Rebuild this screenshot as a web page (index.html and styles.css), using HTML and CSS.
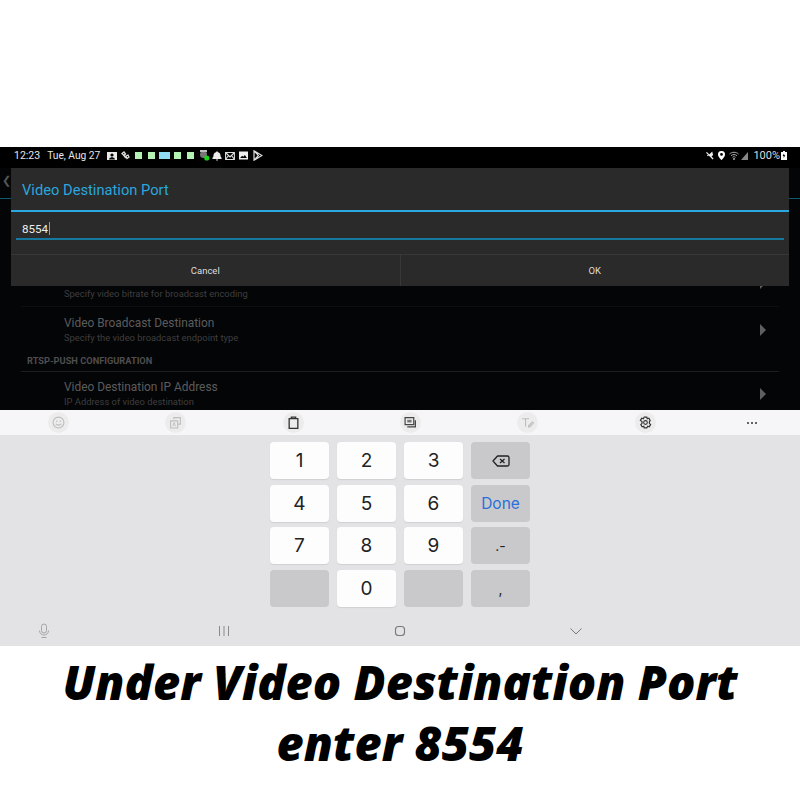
FILE: index.html
```html
<!DOCTYPE html>
<html lang="en">
<head>
	<meta charset="UTF-8">
	<title>Video Destination Port</title>
	<link rel="stylesheet" href="styles.css">
</head>
<body>
	<div class="page">
		<div class="topgap"></div>
		<div class="screen">
			<div class="status">
				<span class="clock">12:23</span>
				<span class="date">Tue, Aug 27</span>
				<div class="notifs">
					<svg class="ic card" viewBox="0 0 10 10"><path fill="#e8e8e8" fill-rule="evenodd" d="M0 1h10v8H0zM5 2.400a1.600 1.600 0 1 0 0 3.200 1.600 1.600 0 0 0 0-3.200zM2 8.400h6C7.600 6.800 6 6.300 5 6.300S2.400 6.800 2 8.400z"/></svg>
					<svg class="ic link" viewBox="0 0 9 10"><path fill="none" stroke="#ddd" stroke-width="1.300" d="M1 2.500l2-1.500 1.500 2L3 4.500zM5 5l2-1 1 2-2 1.500zM3 5l2 2"/></svg>
					<i class="sq m5"></i>
					<i class="sq m6"></i>
					<i class="sq wide"></i>
					<i class="sq m4"></i>
					<i class="sq m6"></i>
					<svg class="ic avatar" viewBox="0 0 11 11"><circle cx="4.500" cy="4.500" r="3.500" fill="#777"/><path fill="#bbb" d="M1 0h7v2H1z"/><circle cx="7.800" cy="8" r="2.600" fill="#1fd11f"/></svg>
					<svg class="ic bell" viewBox="0 0 10 10"><path fill="#eee" d="M5 0l1 1.200C8 1.700 8.600 3.500 8.600 5.500L10 7.500 8.500 8H1.500L0 7.500l1.400-2C1.400 3.500 2 1.700 4 1.200zM3.800 8.500h2.400L5 10z"/></svg>
					<svg class="ic mail" viewBox="0 0 10 10"><path fill="none" stroke="#ddd" stroke-width="1.100" d="M.6 1.500h8.800v7H.6zM.6 1.500L5 6l4.400-4.500M.6 8.500L3.500 4.500M9.400 8.500L6.500 4.500"/></svg>
					<svg class="ic photo" viewBox="0 0 10 10"><path fill="#eee" fill-rule="evenodd" d="M0 .5h10v9H0zM1.200 7.800h7.600L6.500 4.500 4.800 6.500 3.500 5.300z"/></svg>
					<svg class="ic play" viewBox="0 0 10 11"><path fill="none" stroke="#ddd" stroke-width="1.200" d="M1 .8l8 4.700-8 4.700zM1 .8l4.500 4.700L1 10.200"/></svg>
				</div>
				<div class="sysicons">
					<svg class="ic mute" viewBox="0 0 9 10"><path fill="#eee" d="M1 1l7.500 7.500-1 1L0 2zM2.500 5l2.800-2.800L7 .5l1 4-1.800 1.800zM1 4.500h2l-1 1.500z"/></svg>
					<svg class="ic pin" viewBox="0 0 7 9"><path fill="#fff" fill-rule="evenodd" d="M3.500 0A3.400 3.400 0 0 0 0 3.400C0 5.800 3.500 9 3.500 9S7 5.800 7 3.400A3.400 3.400 0 0 0 3.500 0zm0 2a1.400 1.400 0 1 1 0 2.800 1.400 1.400 0 0 1 0-2.800z"/></svg>
					<svg class="ic wifi" viewBox="0 0 10 9"><path fill="none" stroke="#aaa" stroke-width="1" d="M.5 3C3 .7 7 .7 9.500 3M2 4.700c1.700-1.500 4.300-1.500 6 0M3.500 6.300c1-.8 2-.8 3 0"/><circle cx="5" cy="8" r="1" fill="#aaa"/></svg>
					<svg class="ic signal" viewBox="0 0 7 8"><path fill="#888" d="M7 0v8H0z"/></svg>
					<span class="batt">100%</span>
					<svg class="ic charge" viewBox="0 0 6 9"><path fill="#fff" fill-rule="evenodd" d="M2 0h2v1h2v8H0V1h2zM3 2.500L1.700 5h1v2L4.300 4.300h-1z"/></svg>
				</div>
			</div>
			<div class="appbar"><span class="back">&#10094;</span></div>
			<div class="list">
				<div class="row first">
					<div class="sub">Specify video bitrate for broadcast encoding</div>
					<i class="arrow"></i>
				</div>
				<div class="row">
					<div>
						<div class="name">Video Broadcast Destination</div>
						<div class="sub">Specify the video broadcast endpoint type</div>
					</div>
					<i class="arrow"></i>
				</div>
				<div class="section">RTSP-PUSH CONFIGURATION</div>
				<div class="row last">
					<div>
						<div class="name">Video Destination IP Address</div>
						<div class="sub">IP Address of video destination</div>
					</div>
					<i class="arrow"></i>
				</div>
			</div>
			<div class="dialog">
				<div class="dialog-title">Video Destination Port</div>
				<div class="dialog-body">
					<div class="field"><span>8554</span><i class="caret"></i></div>
				</div>
				<div class="buttons">
					<div class="btn">Cancel</div>
					<div class="btn">OK</div>
				</div>
			</div>
		</div>
		<div class="toolbar">
			<div class="tool"><span class="disc">
				<svg viewBox="0 0 12 12"><circle cx="6" cy="6" r="5" fill="none" stroke="#bdbdbd"/><circle cx="4.300" cy="4.800" r=".7" fill="#bdbdbd"/><circle cx="7.700" cy="4.800" r=".7" fill="#bdbdbd"/><path fill="none" stroke="#bdbdbd" d="M3.500 7.200c1 1.600 4 1.600 5 0"/></svg>
			</span></div>
			<div class="tool"><span class="disc">
				<svg viewBox="0 0 12 12"><path fill="none" stroke="#bdbdbd" d="M4.500 3V1.500h6v6H8.500M1.500 4.500h6.500v6.500H1.500z"/><path fill="none" stroke="#bdbdbd" stroke-width=".8" d="M3.500 9.500l1.200-3.500 1.200 3.500"/></svg>
			</span></div>
			<div class="tool"><span class="disc">
				<svg viewBox="0 0 12 12"><path fill="none" stroke="#333" stroke-width="1.200" d="M2 2.500h8v9H2zM4 2.500V1h4v1.500"/></svg>
			</span></div>
			<div class="tool"><span class="disc">
				<svg viewBox="0 0 12 12"><path fill="none" stroke="#444" stroke-width="1.100" d="M1 1.500h8v6.500H1zM3 10h7.500V4"/><path fill="#777" d="M3 3.500h4v2.500H3z"/></svg>
			</span></div>
			<div class="tool"><span class="disc">
				<svg viewBox="0 0 12 12"><path fill="none" stroke="#bdbdbd" d="M1 2.500h6.500M4.200 2.500V10"/><path fill="none" stroke="#bdbdbd" d="M7 9l3.500-3.500 1 1L8 10H7z"/></svg>
			</span></div>
			<div class="tool"><span class="disc">
				<svg viewBox="0 0 12 12"><circle cx="6" cy="6" r="1.700" fill="none" stroke="#333"/><path fill="none" stroke="#333" stroke-width="1.100" d="M4.800 1h2.400l.4 1.500 1.500-.4 1.200 2L9.600 5.200v1.600l1.100 1.100-1.200 2-1.500-.4L7.200 11H4.800l-.4-1.500-1.500.4-1.200-2 1.100-1.100V5.200L1.300 4.100l1.200-2 1.500.4z"/></svg>
			</span></div>
			<div class="tool more"><i></i><i></i><i></i></div>
		</div>
		<div class="keyboard">
			<div class="keys">
				<div class="key">1</div>
				<div class="key">2</div>
				<div class="key">3</div>
				<div class="key fn">
					<svg class="del" viewBox="0 0 18 12"><path fill="none" stroke="#222" stroke-width="1.300" stroke-linejoin="round" d="M5.500 1H15.500a1.500 1.500 0 0 1 1.500 1.500v7a1.500 1.500 0 0 1-1.500 1.500H5.500L1 6z"/><path fill="none" stroke="#222" stroke-width="1.300" d="M8 4l4.500 4M12.500 4L8 8"/></svg>
				</div>
				<div class="key">4</div>
				<div class="key">5</div>
				<div class="key">6</div>
				<div class="key fn done">Done</div>
				<div class="key">7</div>
				<div class="key">8</div>
				<div class="key">9</div>
				<div class="key fn small">.-</div>
				<div class="key fn"></div>
				<div class="key">0</div>
				<div class="key fn"></div>
				<div class="key fn small">,</div>
			</div>
			<div class="navbar">
				<svg class="nav mic" viewBox="0 0 12 16"><rect x="3.500" y="1" width="5" height="9" rx="2.500" fill="none" stroke="#a5a5a5"/><path fill="none" stroke="#a5a5a5" d="M1.500 7.500c0 6 9 6 9 0M3.500 14.500h5"/></svg>
				<svg class="nav" viewBox="0 0 12 12"><path fill="none" stroke="#8a8a8a" d="M1.500 1v10M6 1v10M10.500 1v10"/></svg>
				<svg class="nav" viewBox="0 0 12 12"><rect x="1.500" y="1.500" width="9" height="9" rx="3" fill="none" stroke="#777" stroke-width="1.100"/></svg>
				<svg class="nav" viewBox="0 0 12 12"><path fill="none" stroke="#777" d="M.5 3.500L6 9l5.500-5.500"/></svg>
			</div>
		</div>
		<div class="caption">Under Video Destination Port<br>enter 8554</div>
	</div>
</body>
</html>
```

FILE: styles.css
```css
*{margin: 0;padding: 0;box-sizing: border-box;}
body{background: #fff;font-family: Roboto, "Liberation Sans", sans-serif;}
.page{width: 800px;height: 800px;display: flex;flex-direction: column;overflow: hidden;}
.topgap{height: 147px;flex: none;}
.ic{display: block;height: auto;flex: none;}
.card{width: 10px;}
.link{width: 9px;margin-left: 4px;}
.avatar{width: 11px;margin-left: 5px;}
.bell{width: 10px;margin-left: 2px;}
.mail{width: 10px;margin-left: 3px;}
.photo{width: 9px;margin-left: 4px;}
.play{width: 10px;margin-left: 5px;}
.mute{width: 8px;}
.pin{width: 7px;margin-left: 4px;}
.wifi{width: 10px;margin-left: 4px;}
.signal{width: 7px;margin-left: 2px;}
.charge{width: 6px;margin-left: 1px;}

.screen{height: 263px;flex: none;background: #040507;position: relative;overflow: hidden;}
.status{height: 21px;background: #000;display: flex;align-items: center;padding: 0 13px 4px 14px;color: #e6e6e6;font-size: 10.500px;}
.date{margin-left: 7px;font-size: 10.200px;}
.notifs{display: flex;align-items: center;margin-left: 7px;}
.sysicons{display: flex;align-items: center;margin-left: auto;}
.sq{display: block;width: 7px;height: 7px;background: #b4f2b4;}
.sq.m4{margin-left: 4px;}
.sq.m5{margin-left: 5px;}
.sq.m6{margin-left: 6px;}
.sq.wide{width: 11px;background: #8fdcf5;margin-left: 4px;}
.batt{font-size: 11px;margin-left: 5px;color: #ddd;}

.appbar{height: 31px;border-bottom: 1px solid #0e5870;position: relative;}
.back{position: absolute;left: 2px;top: 6px;font-size: 11px;color: #555;}

.list{padding: 0 21px;}
.row{display: flex;justify-content: space-between;align-items: center;padding-left: 43px;padding-right: 13px;height: 46px;}
.row.first{height: 108px;align-items: flex-end;padding-bottom: 6px;border-bottom: 1px solid #0e0f11;}
.row.first .arrow{margin-bottom: 11px;}
.row.last{height: 44px;}
.name{font-size: 11.900px;line-height: 15px;color: #5c5c5c;}
.sub{font-size: 9.400px;line-height: 13px;color: #3f3f3f;}
.arrow{display: block;width: 0;height: 0;border-left: 6px solid #5f5f5f;border-top: 6px solid transparent;border-bottom: 6px solid transparent;}
.section{height: 19px;padding: 2px 0 0 6px;border-bottom: 1px solid #1c1d20;font-size: 9.250px;font-weight: 700;line-height: 11px;color: #4e4e4e;}

.dialog{position: absolute;left: 11px;top: 21px;width: 778px;height: 118px;background: #2a2a2a;display: flex;flex-direction: column;}
.dialog-title{height: 44px;border-bottom: 2px solid #29a9df;padding: 14px 0 0 11px;font-size: 14.700px;line-height: 17px;color: #2aa6de;}
.dialog-body{height: 42px;padding: 0 5px;}
.field{height: 28px;display: flex;align-items: center;padding: 7px 0 0 6px;border-bottom: 2px solid #14789f;color: #eee;font-size: 11.600px;}
.caret{display: block;width: 1px;height: 13px;background: #999;margin-left: 1px;}
.buttons{flex: 1;display: flex;border-top: 1px solid #383838;}
.btn{flex: 1;display: flex;align-items: center;justify-content: center;font-size: 9.500px;color: #ddd;}
.btn + .btn{border-left: 1px solid #383838;}

.toolbar{height: 25px;flex: none;background: #f6f6f8;display: flex;align-items: center;}
.tool{width: 117.300px;display: flex;justify-content: center;flex: none;}
.disc{width: 21px;height: 21px;border-radius: 50%;background: #ececec;display: flex;align-items: center;justify-content: center;}
.disc svg{width: 13px;height: 13px;}
.tool.more{gap: 2px;margin-left: -10px;}
.more i{display: block;width: 2px;height: 2px;border-radius: 50%;background: #333;}

.keyboard{height: 211px;flex: none;background: #e3e3e6;display: flex;flex-direction: column;}
.keys{display: grid;grid-template-columns: repeat(4, 59.500px);grid-auto-rows: 37px;column-gap: 7.500px;row-gap: 5.700px;justify-content: center;padding-top: 7px;}
.key{background: #fdfdfe;border-radius: 4px;box-shadow: 0 1px 1px #d0d0d2;display: flex;align-items: center;justify-content: center;font-family: Inter, "Liberation Sans", sans-serif;font-size: 19px;color: #222;}
.key.fn{background: #c9c9cb;box-shadow: none;}
.key.done{font-size: 15.500px;color: #2a6fdc;}
.key.small{font-size: 14px;}
.del{width: 18px;height: 12px;}
.navbar{flex: 1;display: flex;align-items: center;gap: 164px;padding: 8px 0 0 38px;}
.nav{width: 12px;height: 12px;}
.nav.mic{height: 16px;margin-right: 4px;}

.caption{flex: 1;text-align: center;font-family: "Open Sans", "Liberation Sans", sans-serif;font-weight: 800;font-style: italic;font-size: 47px;line-height: 61px;color: #000;padding-top: 6px;}
```
